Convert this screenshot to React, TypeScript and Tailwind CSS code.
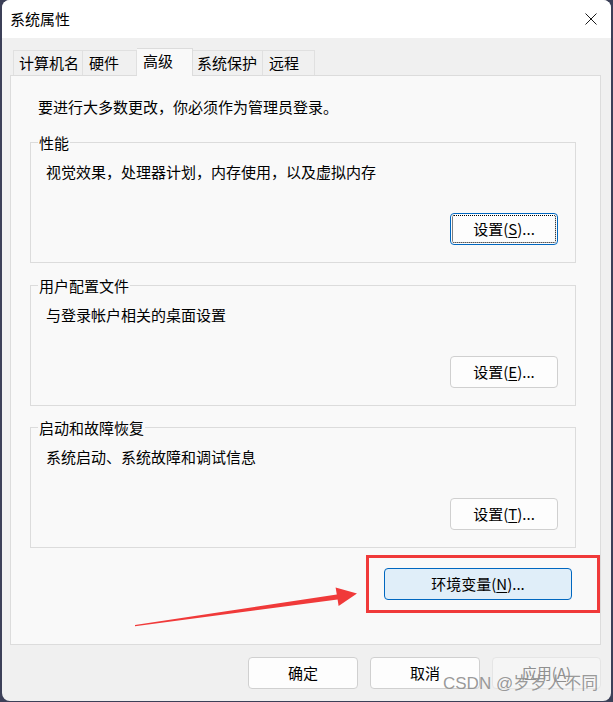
import React from "react";

function Btn({
  children,
  className = "",
  focused = false,
  primary = false,
  disabled = false,
}: {
  children: React.ReactNode;
  className?: string;
  focused?: boolean;
  primary?: boolean;
  disabled?: boolean;
}) {
  let cls = "border-[#d0d0d0] bg-[#fdfdfd] text-black";
  if (focused) cls = "border-[#0067c0] bg-[#fdfdfd] text-black";
  if (primary) cls = "border-[#0067c0] bg-[#e0eef9] text-black";
  if (disabled) cls = "border-[#e5e5e5] bg-[#f5f5f5] text-[#8f8f8f]";
  return (
    <div
      className={`relative flex h-[32px] items-center justify-center rounded-[4px] border leading-[20px] ${cls} ${className}`}
    >
      {focused && (
        <span className="absolute inset-[1px] rounded-[2px] border border-dotted border-black" />
      )}
      <span className="relative">{children}</span>
    </div>
  );
}

function Group({
  title,
  desc,
  btn,
  className = "",
}: {
  title: string;
  desc: string;
  btn: React.ReactNode;
  className?: string;
}) {
  return (
    <div
      className={`relative ml-[19px] h-[121px] w-[546px] border border-[#dcdcdc] ${className}`}
    >
      <span className="absolute -top-[10px] left-[7px] bg-[#f9f9f9] px-[1px] leading-[20px]">
        {title}
      </span>
      <div className="pl-[15px] pt-[19px] leading-[20px]">{desc}</div>
      <div className="mt-[31px] flex justify-end pr-[17px]">{btn}</div>
    </div>
  );
}

export default function App() {
  return (
    <div className="relative h-[702px] w-[613px] overflow-hidden bg-[#3c4058] font-['Noto_Sans_CJK_SC','Noto_Sans',sans-serif] text-[15px] text-black">
      <div className="ml-[2px] flex h-[701px] w-[609px] flex-col overflow-hidden rounded-[8px] bg-[#f0f0f0]">
        {/* title bar */}
        <div className="flex h-[38px] items-center justify-between bg-white pl-[8px] pr-[14px]">
          <span className="leading-[20px]">系统属性</span>
          <svg width="12" height="12" viewBox="0 0 12 12" className="text-[#1a1a1a]">
            <path d="M0.5 0.5 L11.5 11.5 M11.5 0.5 L0.5 11.5" stroke="currentColor" strokeWidth="1" fill="none" />
          </svg>
        </div>

        <div className="px-[8px] pr-[10px]">
          {/* tabs */}
          <div className="mt-[10px] flex h-[27px] items-end pl-[3px]">
            <div className="h-[25px] w-[70px] border border-b-0 border-[#e0e0e0] pl-[5px] leading-[23px]">计算机名</div>
            <div className="h-[25px] w-[54px] border border-b-0 border-l-0 border-[#e0e0e0] pl-[6px] leading-[23px]">硬件</div>
            <div className="relative z-10 -mb-px h-[28px] w-[56px] border border-b-0 border-l-0 border-[#dcdcdc] bg-[#f9f9f9] pl-[6px] leading-[24px]">高级</div>
            <div className="h-[25px] w-[70px] border border-b-0 border-l-0 border-[#e0e0e0] pl-[4px] leading-[23px]">系统保护</div>
            <div className="h-[25px] w-[52px] border border-b-0 border-l-0 border-[#e0e0e0] pl-[6px] leading-[23px]">远程</div>
          </div>

          {/* panel */}
          <div className="h-[570px] w-[591px] border border-[#dcdcdc] bg-[#f9f9f9]">
            <p className="ml-[27px] mt-[21px] leading-[20px]">要进行大多数更改，你必须作为管理员登录。</p>

            <Group
              className="mt-[25px]"
              title="性能"
              desc="视觉效果，处理器计划，内存使用，以及虚拟内存"
              btn={
                <Btn focused className="w-[108px]">
                  设置(<u className="underline-offset-2">S</u>)...
                </Btn>
              }
            />
            <Group
              className="mt-[22px]"
              title="用户配置文件"
              desc="与登录帐户相关的桌面设置"
              btn={
                <Btn className="w-[108px]">
                  设置(<u className="underline-offset-2">E</u>)...
                </Btn>
              }
            />
            <Group
              className="mt-[21px]"
              title="启动和故障恢复"
              desc="系统启动、系统故障和调试信息"
              btn={
                <Btn className="w-[108px]">
                  设置(<u className="underline-offset-2">T</u>)...
                </Btn>
              }
            />

            <div className="mt-[20px] flex justify-end pr-[28px]">
              <Btn primary className="w-[188px]">
                环境变量(<u className="underline-offset-2">N</u>)...
              </Btn>
            </div>
          </div>

          {/* bottom buttons */}
          <div className="mt-[12px] flex justify-end gap-[12px]">
            <Btn className="w-[110px]">确定</Btn>
            <Btn className="w-[110px]">取消</Btn>
            <Btn disabled className="w-[109px]">
              应用(<u className="underline-offset-2">A</u>)
            </Btn>
          </div>
        </div>
      </div>

      {/* annotation: red box */}
      <div className="absolute left-[366px] top-[555px] h-[58px] w-[234px] border-[3px] border-[#f03a3a]" />

      {/* annotation: arrow */}
      <svg className="pointer-events-none absolute left-0 top-0" width="613" height="702" viewBox="0 0 613 702">
        <polygon
          points="135,625 336.8,594.6 335.6,587.5 357,593.5 338.6,606 337.6,599.4 135,626.2"
          fill="#f03a3a"
        />
      </svg>

      {/* watermark */}
      <div className="pointer-events-none absolute left-[443px] top-[673px] font-['Liberation_Sans','Noto_Sans_CJK_SC',sans-serif] text-[17px] leading-[22px] text-[#8d8d8d]/90">
        CSDN @岁岁人不同
      </div>
    </div>
  );
}
